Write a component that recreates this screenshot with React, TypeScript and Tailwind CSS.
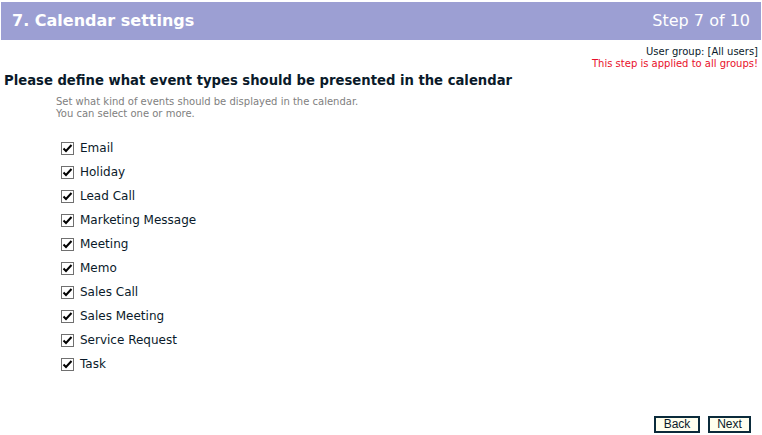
import React from "react";

const items = [
  "Email",
  "Holiday",
  "Lead Call",
  "Marketing Message",
  "Meeting",
  "Memo",
  "Sales Call",
  "Sales Meeting",
  "Service Request",
  "Task",
];

function Check() {
  return (
    <span className="flex h-[13px] w-[13px] items-center justify-center border border-[#707070] bg-white">
      <svg width="11" height="11" viewBox="0 0 11 11">
        <path d="M1.5 5.5 L4 8 L9.5 2" fill="none" stroke="#000" strokeWidth="2" />
      </svg>
    </span>
  );
}

export default function App() {
  const font = { fontFamily: '"DejaVu Sans", Verdana, sans-serif' };
  return (
    <div className="h-[435px] w-[762px] bg-white" style={font}>
      <div className="pt-[2px] px-[1px]">
        <div className="flex h-[38px] items-center justify-between bg-[#9c9fd3] pl-[11px] pr-[11px] text-white">
          <span className="text-[16px] font-bold">7. Calendar settings</span>
          <span className="text-[16px]">Step 7 of 10</span>
        </div>
      </div>
      <div className="mt-[6px] flex flex-col items-end pr-[4px] text-[10px] leading-[12px]">
        <span className="text-[#0a1a2a]">User group: [All users]</span>
        <span className="text-[#e8102a]">This step is applied to all groups!</span>
      </div>
      <div className="mt-[3px] pl-[4px] text-[13.2px] font-bold leading-[16px] text-[#0a1a2a]">
        Please define what event types should be presented in the calendar
      </div>
      <div className="mt-[7px] pl-[56px] text-[10px] leading-[12px] text-[#808080]">
        <div>Set what kind of events should be displayed in the calendar.</div>
        <div>You can select one or more.</div>
      </div>
      <div className="mt-[16px] flex flex-col pl-[61px]">
        {items.map((it) => (
          <div key={it} className="flex h-[24px] items-center gap-[6px]">
            <Check />
            <span className="text-[12px] text-[#0a1a2a]">{it}</span>
          </div>
        ))}
      </div>
      <div className="mt-[40px] flex justify-end gap-[8px] pr-[11px]" style={{ fontFamily: '"Liberation Sans", Arial, sans-serif' }}>
        <button className="h-[17px] w-[46px] border-2 border-[#0b2b3b] bg-[#ffffee] text-[12px] leading-[13px] text-[#0a1a2a]">Back</button>
        <button className="h-[17px] w-[43px] border-2 border-[#0b2b3b] bg-[#ffffee] text-[12px] leading-[13px] text-[#0a1a2a]">Next</button>
      </div>
    </div>
  );
}
